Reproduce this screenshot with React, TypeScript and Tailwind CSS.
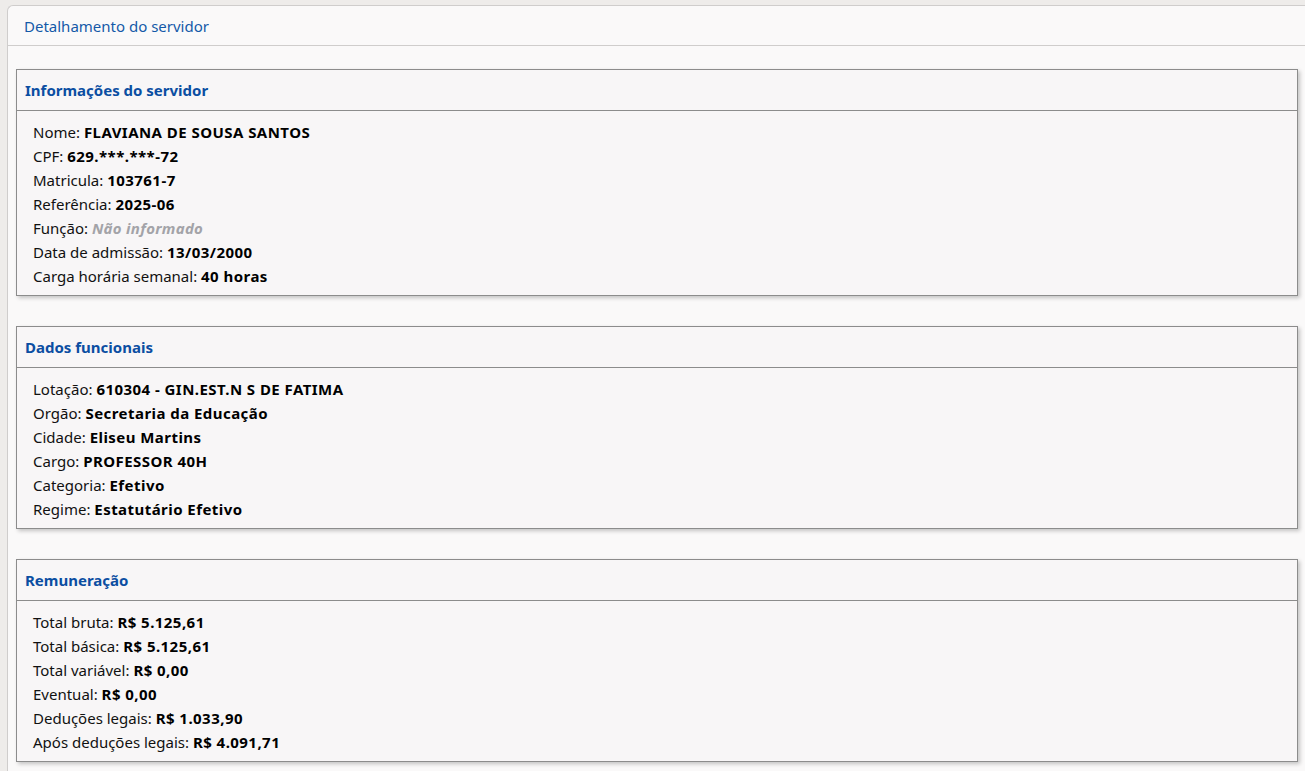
import React from 'react';

type Row = { label: string; value: string; muted?: boolean };

const SECTIONS: { title: string; rows: Row[] }[] = [
  {
    title: 'Informações do servidor',
    rows: [
      { label: 'Nome', value: 'FLAVIANA DE SOUSA SANTOS' },
      { label: 'CPF', value: '629.***.***-72' },
      { label: 'Matricula', value: '103761-7' },
      { label: 'Referência', value: '2025-06' },
      { label: 'Função', value: 'Não informado', muted: true },
      { label: 'Data de admissão', value: '13/03/2000' },
      { label: 'Carga horária semanal', value: '40 horas' },
    ],
  },
  {
    title: 'Dados funcionais',
    rows: [
      { label: 'Lotação', value: '610304 - GIN.EST.N S DE FATIMA' },
      { label: 'Orgão', value: 'Secretaria da Educação' },
      { label: 'Cidade', value: 'Eliseu Martins' },
      { label: 'Cargo', value: 'PROFESSOR 40H' },
      { label: 'Categoria', value: 'Efetivo' },
      { label: 'Regime', value: 'Estatutário Efetivo' },
    ],
  },
  {
    title: 'Remuneração',
    rows: [
      { label: 'Total bruta', value: 'R$ 5.125,61' },
      { label: 'Total básica', value: 'R$ 5.125,61' },
      { label: 'Total variável', value: 'R$ 0,00' },
      { label: 'Eventual', value: 'R$ 0,00' },
      { label: 'Deduções legais', value: 'R$ 1.033,90' },
      { label: 'Após deduções legais', value: 'R$ 4.091,71' },
    ],
  },
];

const Section = ({ title, rows }: { title: string; rows: Row[] }) => (
  <div className="border border-[#8c8c8c] bg-[#f8f6f7] shadow-[2px_2px_4px_rgba(0,0,0,0.22)] mb-[30px]">
    <div className="h-[41px] flex items-center px-[8px] pt-[1px] border-b border-[#8c8c8c]">
      <h2 className="text-[15px] font-bold text-[#0b4ea2]">{title}</h2>
    </div>
    <div className="pl-[16px] pt-[9px] pb-[7px]">
      {rows.map((r) => (
        <div key={r.label} className="h-[24px] leading-[24px] text-[15px] text-[#111]">
          {r.label}:{' '}
          {r.muted ? (
            <span className="font-bold italic tracking-[0.3px] text-[#a3a3a8]">{r.value}</span>
          ) : (
            <span className="font-bold tracking-[0.45px] text-black">{r.value}</span>
          )}
        </div>
      ))}
    </div>
  </div>
);

export default function App() {
  return (
    <div
      className="min-h-screen bg-[#eeecea] pt-[5px] pl-[7px]"
      style={{ fontFamily: '"Noto Sans", "Open Sans", sans-serif' }}
    >
      <div className="min-h-[766px] bg-[#faf9f9] border-t border-l border-[#cfcdcc] rounded-tl-[6px]">
        <div className="h-[40px] flex items-center px-[16px] pt-[1px] border-b border-[#cfcdcc]">
          <h1 className="text-[15px] text-[#1459a8]">Detalhamento do servidor</h1>
        </div>
        <div className="pt-[23px] pl-[8px] pr-[7px]">
          {SECTIONS.map((s) => (
            <Section key={s.title} title={s.title} rows={s.rows} />
          ))}
        </div>
      </div>
    </div>
  );
}
